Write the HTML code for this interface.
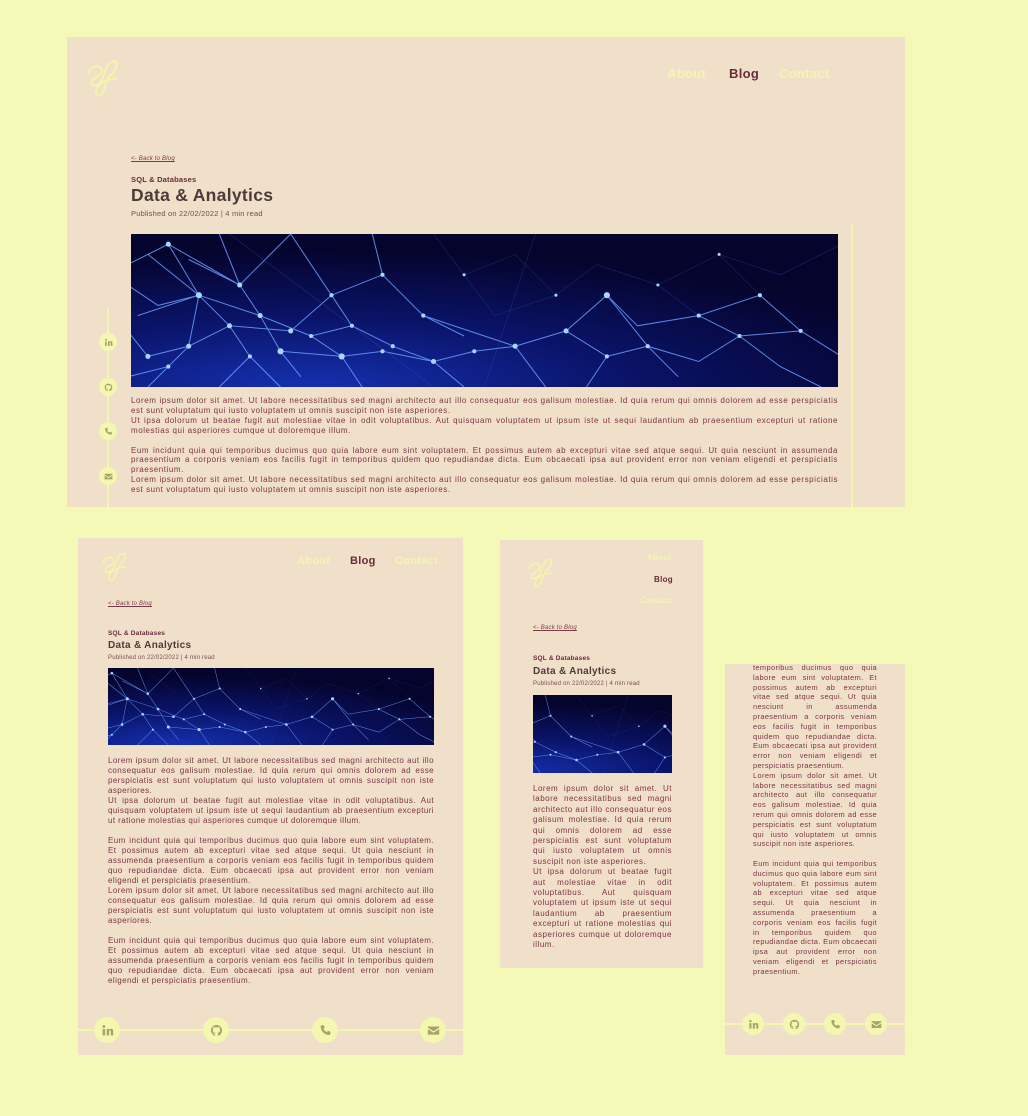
<!DOCTYPE html>
<html><head><meta charset="utf-8">
<style>
*{margin:0;padding:0;box-sizing:border-box}
body{width:1028px;height:1116px;background:#f5f9b8;position:relative;overflow:hidden;font-family:"Liberation Sans",sans-serif;color:#6b2a3a}
.panel{position:absolute;background:#f1e0c9;overflow:hidden}
.abs{position:absolute}
.nav{position:absolute;font-weight:bold;color:#f3f6b2;letter-spacing:0.3px}
.nav.b{color:#6b2a3a}
.back{position:absolute;font-style:italic;text-decoration:underline;color:#7a3a4a;letter-spacing:0.2px}
.cat{position:absolute;font-weight:bold;color:#6b2a3a;letter-spacing:0.2px}
.ttl{position:absolute;font-weight:bold;color:#4d3b3b;letter-spacing:0.3px}
.pub{position:absolute;color:#7a4a55;letter-spacing:0.2px}
.txt{position:absolute;text-align:justify;color:#7a3447;letter-spacing:0.42px}
.txt p{margin:0}
.ic{position:absolute;border-radius:50%;background:#f3f7b0;display:flex;align-items:center;justify-content:center}
.ic svg{fill:#a9a46a}
.line{position:absolute;background:#f3f7b0}
.img{position:absolute;background:#06073a}
</style></head><body>
<svg width="0" height="0" style="position:absolute">
<defs>
<radialGradient id="gl" cx="0.25" cy="1" r="0.9"><stop offset="0" stop-color="#1530b0"/><stop offset="0.5" stop-color="#0a1368"/><stop offset="1" stop-color="#05042c"/></radialGradient>
<symbol id="net" viewBox="0 0 700 150" preserveAspectRatio="xMidYMid slice">
<rect width="700" height="150" fill="url(#gl)"/>
<g stroke="#6a9cff" stroke-width="1" fill="none" opacity="0.85">
<path d="M0 30 L40 10 L70 60 L100 90 L120 120 L90 150 M40 10 L110 50 L130 80 L150 115 L170 140 M70 60 L130 80 L180 100 L210 120 L250 115 M10 80 L70 60 L60 110 L100 90 L160 95 M20 150 L60 110 L20 120 L0 95 M110 50 L160 0 L200 60 L220 90 L260 110 L300 125 L340 115 M200 60 L250 40 L290 80 L330 100 M150 115 L210 120 L230 150 M250 115 L300 125 L330 150 M340 115 L380 110 L430 95 L470 60 L510 110 L540 140 M470 60 L500 90 L560 80 L620 60 L660 95 L700 120 M430 95 L470 120 L510 110 L560 125 L600 100 L660 95 M560 80 L600 100 L640 130 L680 150 M380 110 L410 150 M470 120 L450 150 M20 20 L70 60 L30 70 L0 50 M90 0 L110 50 L60 25 M250 40 L240 0 M290 80 L380 110 M160 95 L200 60 M180 100 L220 90 M0 140 L40 130 L60 110 M120 120 L150 150"/>
</g>
<g stroke="#3550c0" stroke-width="0.5" fill="none" opacity="0.5">
<path d="M300 0 L330 40 L380 20 L420 60 L460 30 L520 50 L580 20 L640 40 L700 10 M330 40 L360 80 L420 60 M520 50 L560 80 M580 20 L620 60 M100 0 L300 150 M400 0 L350 150"/>
</g>
<g fill="#a8d8ff">
<circle cx="40" cy="10" r="2.5"/><circle cx="70" cy="60" r="3"/><circle cx="100" cy="90" r="2.5"/><circle cx="120" cy="120" r="2"/><circle cx="110" cy="50" r="2.5"/><circle cx="130" cy="80" r="2.5"/><circle cx="150" cy="115" r="3"/><circle cx="180" cy="100" r="2"/><circle cx="210" cy="120" r="3"/><circle cx="250" cy="115" r="2"/><circle cx="60" cy="110" r="2.5"/><circle cx="160" cy="95" r="2.5"/><circle cx="200" cy="60" r="2"/><circle cx="220" cy="90" r="2"/><circle cx="260" cy="110" r="2"/><circle cx="300" cy="125" r="2.5"/><circle cx="340" cy="115" r="2"/><circle cx="380" cy="110" r="2.5"/><circle cx="430" cy="95" r="2.5"/><circle cx="470" cy="60" r="3"/><circle cx="510" cy="110" r="2"/><circle cx="560" cy="80" r="2"/><circle cx="620" cy="60" r="2"/><circle cx="660" cy="95" r="2"/><circle cx="600" cy="100" r="2"/><circle cx="470" cy="120" r="2"/><circle cx="290" cy="80" r="2"/><circle cx="250" cy="40" r="2"/><circle cx="20" cy="120" r="2.5"/><circle cx="330" cy="40" r="1.5"/><circle cx="420" cy="60" r="1.5"/><circle cx="520" cy="50" r="1.5"/><circle cx="580" cy="20" r="1.5"/><circle cx="40" cy="130" r="2"/></g>
</symbol>
<symbol id="logo" viewBox="0 0 50 50"><path d="M6 22 C8 14 18 12 20 18 C22 25 10 26 9 32 C8 38 18 36 21 28 C24 20 27 10 33 9 C39 8 38 18 28 26 C26 30 24 36 22 42 C20 48 13 48 14 41 C15 34 26 28 36 28" fill="none" stroke="#f3f6a8" stroke-width="2.2" stroke-linecap="round"/></symbol>
<symbol id="in" viewBox="0 0 16 16"><rect x="2" y="6" width="3" height="8"/><circle cx="3.5" cy="3" r="1.7"/><path d="M7 6h3v1.2c.6-1 1.6-1.4 2.6-1.4 2 0 2.4 1.4 2.4 3.2V14h-3V9.6c0-1-.2-1.6-1-1.6s-1 .7-1 1.6V14H7z"/></symbol>
<symbol id="gh" viewBox="0 0 16 16"><path d="M8 1a7 7 0 0 0-2.2 13.6c.4 0 .5-.2.5-.4v-1.3c-2 .4-2.4-.9-2.4-.9-.3-.8-.8-1-.8-1-.6-.4 0-.4 0-.4.7 0 1.1.7 1.1.7.6 1.1 1.7.8 2.1.6 0-.5.2-.8.4-1-1.6-.2-3.2-.8-3.2-3.5 0-.8.3-1.4.7-1.9-.1-.2-.3-.9.1-1.9 0 0 .6-.2 1.9.7a6.6 6.6 0 0 1 3.5 0c1.3-.9 1.9-.7 1.9-.7.4 1 .1 1.7.1 1.9.4.5.7 1.1.7 1.9 0 2.7-1.6 3.3-3.2 3.5.3.2.5.7.5 1.3v2c0 .2.1.4.5.4A7 7 0 0 0 8 1z"/></symbol>
<symbol id="ph" viewBox="0 0 16 16"><path d="M3.5 1.5l2.5 0 1.2 3-1.7 1.3c.8 1.8 2.4 3.4 4.2 4.2l1.3-1.7 3 1.2v2.5c0 .8-.7 1.5-1.5 1.5C7 13.5 2 8.5 2 3c0-.8.7-1.5 1.5-1.5z"/></symbol>
<symbol id="em" viewBox="0 0 16 16"><path d="M1 3h14v1.5L8 9 1 4.5z"/><path d="M1 6.3l7 4.5 7-4.5V13H1z"/></symbol>
</defs></svg>

<!-- Panel 1 -->
<div class="panel" style="left:67px;top:37px;width:838px;height:470px">
<svg class="abs" style="left:16px;top:16px" width="46" height="46" viewBox="0 0 50 50"><use href="#logo"/></svg>
<div class="nav" style="left:600px;top:29px;font-size:13px">About</div>
<div class="nav b" style="left:662px;top:29px;font-size:13px">Blog</div>
<div class="nav" style="left:712px;top:29px;font-size:13px">Contact</div>
<div class="back" style="left:64px;top:119px;font-size:6px">&lt;- Back to Blog</div>
<div class="cat" style="left:64px;top:138px;font-size:7.5px">SQL &amp; Databases</div>
<div class="ttl" style="left:64px;top:148px;font-size:17.5px">Data &amp; Analytics</div>
<div class="pub" style="left:64px;top:172px;font-size:7.5px">Published on 22/02/2022 | 4 min read</div>
<svg class="img" style="left:64px;top:197px" width="707" height="153"><use href="#net" width="707" height="153"/></svg>
<div class="line" style="left:784px;top:187px;width:2px;height:290px"></div>
<div class="line" style="left:40px;top:271px;width:2px;height:200px"></div>
<div class="ic" style="left:32px;top:296px;width:18px;height:18px"><svg width="9" height="9"><use href="#in"/></svg></div>
<div class="ic" style="left:32px;top:341px;width:18px;height:18px"><svg width="9" height="9"><use href="#gh"/></svg></div>
<div class="ic" style="left:32px;top:385px;width:18px;height:18px"><svg width="9" height="9"><use href="#ph"/></svg></div>
<div class="ic" style="left:32px;top:430px;width:18px;height:18px"><svg width="9" height="9"><use href="#em"/></svg></div>
<div class="txt" style="left:64px;top:359px;width:707px;font-size:8px;line-height:9.9px;letter-spacing:0.55px">
<p>Lorem ipsum dolor sit amet. Ut labore necessitatibus sed magni architecto aut illo consequatur eos galisum molestiae. Id quia rerum qui omnis dolorem ad esse perspiciatis est sunt voluptatum qui iusto voluptatem ut omnis suscipit non iste asperiores.</p>
<p>Ut ipsa dolorum ut beatae fugit aut molestiae vitae in odit voluptatibus. Aut quisquam voluptatem ut ipsum iste ut sequi laudantium ab praesentium excepturi ut ratione molestias qui asperiores cumque ut doloremque illum.</p><p>&nbsp;</p>
<p>Eum incidunt quia qui temporibus ducimus quo quia labore eum sint voluptatem. Et possimus autem ab excepturi vitae sed atque sequi. Ut quia nesciunt in assumenda praesentium a corporis veniam eos facilis fugit in temporibus quidem quo repudiandae dicta. Eum obcaecati ipsa aut provident error non veniam eligendi et perspiciatis praesentium.</p>
<p>Lorem ipsum dolor sit amet. Ut labore necessitatibus sed magni architecto aut illo consequatur eos galisum molestiae. Id quia rerum qui omnis dolorem ad esse perspiciatis est sunt voluptatum qui iusto voluptatem ut omnis suscipit non iste asperiores.</p>
</div>
</div>

<!-- Panel 2 -->
<div class="panel" style="left:78px;top:538px;width:385px;height:517px">
<svg class="abs" style="left:21px;top:9px" width="36" height="36" viewBox="0 0 50 50"><use href="#logo"/></svg>
<div class="nav" style="left:219px;top:17px;font-size:11px">About</div>
<div class="nav b" style="left:272px;top:17px;font-size:11px">Blog</div>
<div class="nav" style="left:317px;top:17px;font-size:11px">Contact</div>
<div class="back" style="left:30px;top:63px;font-size:6px">&lt;- Back to Blog</div>
<div class="cat" style="left:30px;top:92px;font-size:6.5px">SQL &amp; Databases</div>
<div class="ttl" style="left:30px;top:102px;font-size:10px">Data &amp; Analytics</div>
<div class="pub" style="left:30px;top:117px;font-size:6px">Published on 22/02/2022 | 4 min read</div>
<svg class="img" style="left:30px;top:130px" width="326" height="77"><use href="#net" width="326" height="77"/></svg>
<div class="txt" style="left:30px;top:218px;width:326px;font-size:8px;line-height:10px">
<p>Lorem ipsum dolor sit amet. Ut labore necessitatibus sed magni architecto aut illo consequatur eos galisum molestiae. Id quia rerum qui omnis dolorem ad esse perspiciatis est sunt voluptatum qui iusto voluptatem ut omnis suscipit non iste asperiores.</p>
<p>Ut ipsa dolorum ut beatae fugit aut molestiae vitae in odit voluptatibus. Aut quisquam voluptatem ut ipsum iste ut sequi laudantium ab praesentium excepturi ut ratione molestias qui asperiores cumque ut doloremque illum.</p><p>&nbsp;</p>
<p>Eum incidunt quia qui temporibus ducimus quo quia labore eum sint voluptatem. Et possimus autem ab excepturi vitae sed atque sequi. Ut quia nesciunt in assumenda praesentium a corporis veniam eos facilis fugit in temporibus quidem quo repudiandae dicta. Eum obcaecati ipsa aut provident error non veniam eligendi et perspiciatis praesentium.</p>
<p>Lorem ipsum dolor sit amet. Ut labore necessitatibus sed magni architecto aut illo consequatur eos galisum molestiae. Id quia rerum qui omnis dolorem ad esse perspiciatis est sunt voluptatum qui iusto voluptatem ut omnis suscipit non iste asperiores.</p><p>&nbsp;</p>
<p>Eum incidunt quia qui temporibus ducimus quo quia labore eum sint voluptatem. Et possimus autem ab excepturi vitae sed atque sequi. Ut quia nesciunt in assumenda praesentium a corporis veniam eos facilis fugit in temporibus quidem quo repudiandae dicta. Eum obcaecati ipsa aut provident error non veniam eligendi et perspiciatis praesentium.</p>
</div>
<div class="line" style="left:0;top:491px;width:385px;height:2px"></div>
<div class="ic" style="left:16px;top:479px;width:26px;height:26px"><svg width="13" height="13"><use href="#in"/></svg></div>
<div class="ic" style="left:125px;top:479px;width:26px;height:26px"><svg width="13" height="13"><use href="#gh"/></svg></div>
<div class="ic" style="left:234px;top:479px;width:26px;height:26px"><svg width="13" height="13"><use href="#ph"/></svg></div>
<div class="ic" style="left:342px;top:479px;width:26px;height:26px"><svg width="13" height="13"><use href="#em"/></svg></div>
</div>

<!-- Panel 3 -->
<div class="panel" style="left:500px;top:540px;width:203px;height:428px">
<svg class="abs" style="left:25px;top:13px" width="36" height="36" viewBox="0 0 50 50"><use href="#logo"/></svg>
<div class="nav" style="left:147px;top:13px;font-size:8px">About</div>
<div class="nav b" style="left:154px;top:35px;font-size:8px">Blog</div>
<div class="nav" style="left:140px;top:56px;font-size:8px">Contact</div>
<div class="back" style="left:33px;top:85px;font-size:6px">&lt;- Back to Blog</div>
<div class="cat" style="left:33px;top:115px;font-size:6.5px">SQL &amp; Databases</div>
<div class="ttl" style="left:33px;top:126px;font-size:10px">Data &amp; Analytics</div>
<div class="pub" style="left:33px;top:141px;font-size:6px">Published on 22/02/2022 | 4 min read</div>
<svg class="img" style="left:33px;top:155px" width="139" height="78"><use href="#net" width="139" height="78"/></svg>
<div class="txt" style="left:33px;top:244px;width:139px;font-size:8px;line-height:10.4px;letter-spacing:0.5px">
<p>Lorem ipsum dolor sit amet. Ut labore necessitatibus sed magni architecto aut illo consequatur eos galisum molestiae. Id quia rerum qui omnis dolorem ad esse perspiciatis est sunt voluptatum qui iusto voluptatem ut omnis suscipit non iste asperiores.</p>
<p>Ut ipsa dolorum ut beatae fugit aut molestiae vitae in odit voluptatibus. Aut quisquam voluptatem ut ipsum iste ut sequi laudantium ab praesentium excepturi ut ratione molestias qui asperiores cumque ut doloremque illum.</p>
</div>
</div>

<!-- Panel 4 -->
<div class="panel" style="left:725px;top:664px;width:180px;height:391px">
<div class="txt" style="left:28px;top:-1px;width:124px;font-size:7.4px;line-height:9.8px;letter-spacing:0.38px">
<p>temporibus ducimus quo quia labore eum sint voluptatem. Et possimus autem ab excepturi vitae sed atque sequi. Ut quia nesciunt in assumenda praesentium a corporis veniam eos facilis fugit in temporibus quidem quo repudiandae dicta. Eum obcaecati ipsa aut provident error non veniam eligendi et perspiciatis praesentium.</p>
<p>Lorem ipsum dolor sit amet. Ut labore necessitatibus sed magni architecto aut illo consequatur eos galisum molestiae. Id quia rerum qui omnis dolorem ad esse perspiciatis est sunt voluptatum qui iusto voluptatem ut omnis suscipit non iste asperiores.</p><p>&nbsp;</p>
<p>Eum incidunt quia qui temporibus ducimus quo quia labore eum sint voluptatem. Et possimus autem ab excepturi vitae sed atque sequi. Ut quia nesciunt in assumenda praesentium a corporis veniam eos facilis fugit in temporibus quidem quo repudiandae dicta. Eum obcaecati ipsa aut provident error non veniam eligendi et perspiciatis praesentium.</p>
</div>
<div class="line" style="left:0;top:359px;width:180px;height:2px"></div>
<div class="ic" style="left:17px;top:349px;width:22px;height:22px"><svg width="11" height="11"><use href="#in"/></svg></div>
<div class="ic" style="left:58px;top:349px;width:22px;height:22px"><svg width="11" height="11"><use href="#gh"/></svg></div>
<div class="ic" style="left:99px;top:349px;width:22px;height:22px"><svg width="11" height="11"><use href="#ph"/></svg></div>
<div class="ic" style="left:140px;top:349px;width:22px;height:22px"><svg width="11" height="11"><use href="#em"/></svg></div>
</div>
</body></html>
